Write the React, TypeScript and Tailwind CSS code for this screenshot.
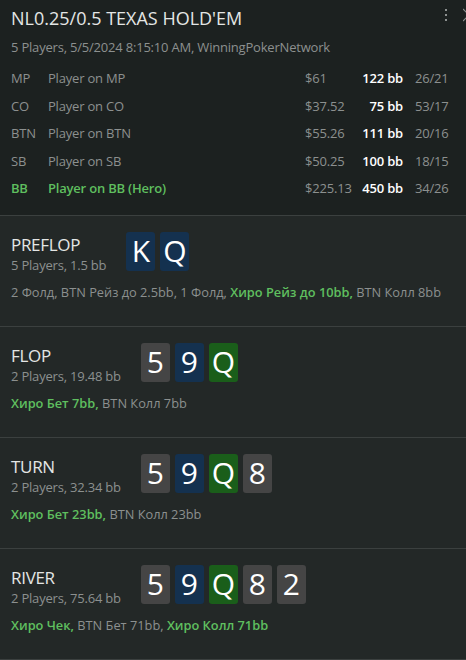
import React from 'react';

type Card = { v: string; c: 'gray' | 'blue' | 'green' };

const players = [
  { pos: 'MP', name: 'Player on MP', money: '$61', bb: '122 bb', stats: '26/21' },
  { pos: 'CO', name: 'Player on CO', money: '$37.52', bb: '75 bb', stats: '53/17' },
  { pos: 'BTN', name: 'Player on BTN', money: '$55.26', bb: '111 bb', stats: '20/16' },
  { pos: 'SB', name: 'Player on SB', money: '$50.25', bb: '100 bb', stats: '18/15' },
  { pos: 'BB', name: 'Player on BB (Hero)', money: '$225.13', bb: '450 bb', stats: '34/26', hero: true },
];

const board: Card[] = [
  { v: '5', c: 'gray' },
  { v: '9', c: 'blue' },
  { v: 'Q', c: 'green' },
  { v: '8', c: 'gray' },
  { v: '2', c: 'gray' },
];

const streets: {
  name: string;
  info: string;
  cards: Card[];
  actions: { t: string; hero?: boolean }[];
}[] = [
  {
    name: 'PREFLOP',
    info: '5 Players, 1.5 bb',
    cards: [
      { v: 'K', c: 'blue' },
      { v: 'Q', c: 'blue' },
    ],
    actions: [
      { t: '2 Фолд, ' },
      { t: 'BTN Рейз до 2.5bb, ' },
      { t: '1 Фолд, ' },
      { t: 'Хиро Рейз до 10bb, ', hero: true },
      { t: 'BTN Колл 8bb' },
    ],
  },
  {
    name: 'FLOP',
    info: '2 Players, 19.48 bb',
    cards: board.slice(0, 3),
    actions: [{ t: 'Хиро Бет 7bb, ', hero: true }, { t: 'BTN Колл 7bb' }],
  },
  {
    name: 'TURN',
    info: '2 Players, 32.34 bb',
    cards: board.slice(0, 4),
    actions: [{ t: 'Хиро Бет 23bb, ', hero: true }, { t: 'BTN Колл 23bb' }],
  },
  {
    name: 'RIVER',
    info: '2 Players, 75.64 bb',
    cards: board,
    actions: [
      { t: 'Хиро Чек, ', hero: true },
      { t: 'BTN Бет 71bb, ' },
      { t: 'Хиро Колл 71bb', hero: true },
    ],
  },
];

const cardBg = {
  gray: 'bg-[#454545]',
  blue: 'bg-[#14314f]',
  green: 'bg-[#1a5e1a]',
};

const PlayingCard: React.FC<{ card: Card }> = ({ card }) => (
  <div
    className={`w-[29px] h-[39px] rounded-[3px] flex items-center justify-center text-[30px] leading-none text-white ${cardBg[card.c]}`}
  >
    {card.v}
  </div>
);

export default function App() {
  return (
    <div
      className="w-[466px] h-[660px] overflow-hidden bg-[#232827] text-[#e4e6e5]"
      style={{ fontFamily: '"Open Sans", "Noto Sans", sans-serif' }}
    >
      {/* Header */}
      <div className="relative bg-[#1c2120] px-[11px] pt-[6px] pb-[12px] border-b border-[#3b403f]">
        <div className="text-[18px] leading-[24px]">NL0.25/0.5 TEXAS HOLD'EM</div>
        <div className="mt-[8px] text-[13px] leading-[18px] text-[#8c908f] tracking-[-0.2px]">
          5 Players, 5/5/2024 8:15:10 AM, WinningPokerNetwork
        </div>
        <div className="mt-[9px] flex flex-col text-[13px] tracking-[-0.2px]">
          {players.map((p) => (
            <div key={p.pos} className="h-[27.5px] flex items-center whitespace-nowrap">
              <div className={`w-[37px] ${p.hero ? 'text-[#5fbf5f] font-semibold' : 'text-[#8c908f]'}`}>{p.pos}</div>
              <div className={`flex-1 ${p.hero ? 'text-[#5fbf5f] font-semibold' : 'text-[#8c908f]'}`}>{p.name}</div>
              <div className="w-[50px] text-[#8c908f]">{p.money}</div>
              <div className="w-[48px] text-right font-semibold text-white">{p.bb}</div>
              <div className="w-[52px] pl-[12px] text-[#8c908f]">{p.stats}</div>
            </div>
          ))}
        </div>
        <div className="absolute right-[19px] top-[9px] flex flex-col gap-[3px]">
          <span className="block w-[2px] h-[2px] bg-[#8c908f]" />
          <span className="block w-[2px] h-[2px] bg-[#8c908f]" />
          <span className="block w-[2px] h-[2px] bg-[#8c908f]" />
        </div>
        <svg className="absolute right-[-3px] top-[8px]" width="6" height="14" viewBox="0 0 6 14">
          <path d="M0 1 L6 7 M0 13 L6 7" stroke="#8c908f" strokeWidth="1.2" fill="none" />
        </svg>
      </div>

      {/* Streets */}
      {streets.map((s) => (
        <div key={s.name} className="h-[111px] px-[11px] pt-[16px] border-b border-[#3b403f]">
          <div className="flex items-start gap-[20px]">
            <div className="pt-[2px]">
              <div className="text-[17px] leading-[22px] tracking-[-0.3px] text-[#e4e6e5]">{s.name}</div>
              <div className="text-[13px] leading-[18px] tracking-[-0.2px] text-[#8c908f]">{s.info}</div>
            </div>
            <div className="flex gap-[5px]">
              {s.cards.map((c, i) => (
                <PlayingCard key={i} card={c} />
              ))}
            </div>
          </div>
          <div className="mt-[9px] text-[12.8px] leading-[18px] text-[#8c908f] whitespace-nowrap">
            {s.actions.map((a, i) => (
              <span key={i} className={a.hero ? 'text-[#5fbf5f] font-semibold' : ''}>
                {a.t}
              </span>
            ))}
          </div>
        </div>
      ))}
    </div>
  );
}
